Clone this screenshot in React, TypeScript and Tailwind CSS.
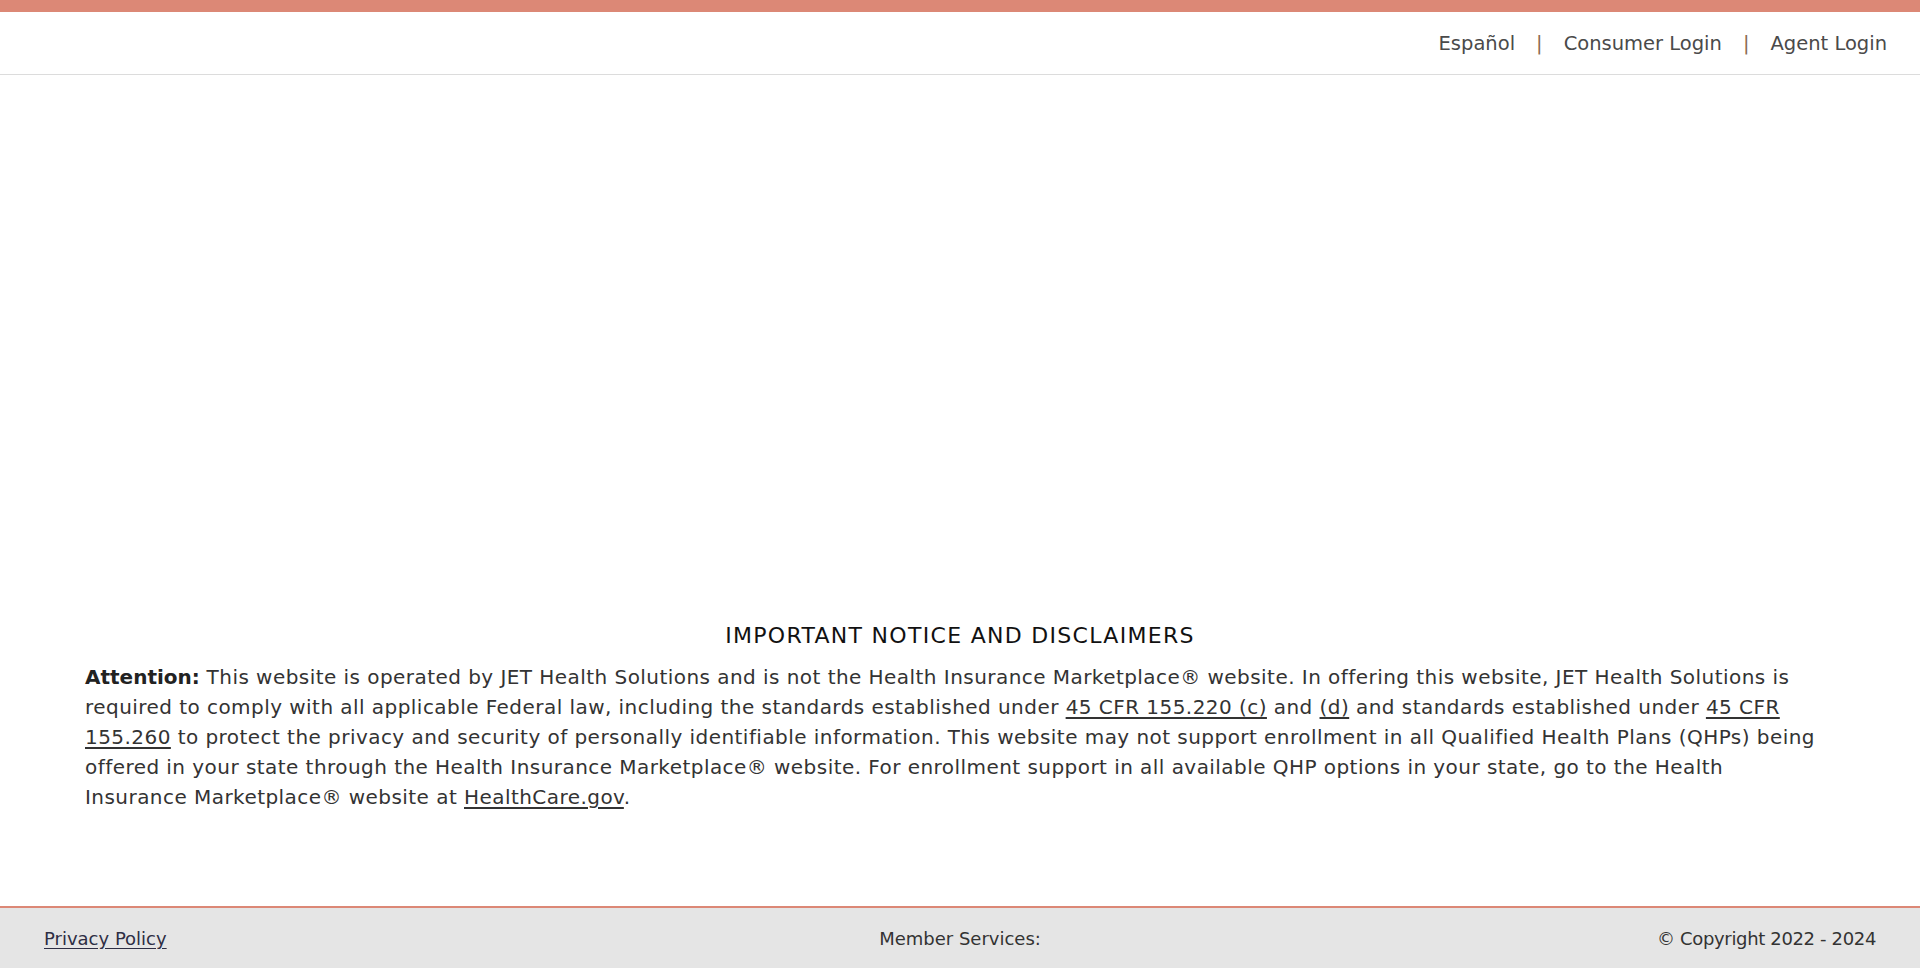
// Landing shell: salmon top rule, utility nav, disclaimer block and footer.
// The hero area above the disclaimer is empty in the reference, so it is
// just padding here.

const NAV_LINKS: readonly string[] = ["Español", "Consumer Login", "Agent Login"];

function TopNav(): JSX.Element {
  return (
    <header className="flex h-[63px] items-center justify-end border-b border-[#dcdcdc] pr-[33px] pt-[2px]">
      <nav className="flex items-center text-[19.5px] text-[#4a4a4a]">
        {NAV_LINKS.map((label, i) => (
          <span key={label} className="flex items-center">
            {i > 0 && <span className="mx-[21px] text-[#8a6a50]">|</span>}
            <a href="#" className="hover:underline">
              {label}
            </a>
          </span>
        ))}
      </nav>
    </header>
  );
}

function Disclaimer(): JSX.Element {
  return (
    <section className="pl-[85px] pr-[95px] pt-[546px]">
      <h2 className="pl-[10px] text-center text-[22px] leading-[30px] tracking-[1.3px] text-[#111]">
        IMPORTANT NOTICE AND DISCLAIMERS
      </h2>
      <p className="mt-[11px] text-[20px] leading-[30px] tracking-[0.45px] text-[#333]">
        <strong className="font-bold tracking-[0px] text-[#222]">Attention:</strong> This website is
        operated by JET Health Solutions and is not the Health Insurance Marketplace® website. In
        offering this website, JET Health Solutions is required to comply with all applicable Federal
        law, including the standards established under{" "}
        <a href="#" className="underline underline-offset-[3px]">
          45 CFR 155.220 (c)
        </a>{" "}
        and{" "}
        <a href="#" className="underline underline-offset-[3px]">
          (d)
        </a>{" "}
        and standards established under{" "}
        <a href="#" className="underline underline-offset-[3px]">
          45 CFR 155.260
        </a>{" "}
        to protect the privacy and security of personally identifiable information. This website may not
        support enrollment in all Qualified Health Plans (QHPs) being offered in your state through the
        Health Insurance Marketplace® website. For enrollment support in all available QHP options in
        your state, go to the Health Insurance Marketplace® website at{" "}
        <a href="#" className="underline underline-offset-[3px]">
          HealthCare.gov
        </a>
        .
      </p>
    </section>
  );
}

function Footer(): JSX.Element {
  return (
    <footer className="grid h-[62px] grid-cols-3 items-center border-t-2 border-[#dc8876] bg-[#e5e5e5] px-[44px] text-[18px] text-[#333]">
      <a href="#" className="justify-self-start underline underline-offset-[3px] text-[#2e2e44]">
        Privacy Policy
      </a>
      <span className="justify-self-center">Member Services:</span>
      <span className="justify-self-end tracking-[-0.35px]">© Copyright 2022 - 2024</span>
    </footer>
  );
}

export default function App(): JSX.Element {
  return (
    <div className="flex min-h-screen flex-col bg-white font-['DejaVu_Sans',sans-serif]">
      <div className="h-[12px] bg-[#dc8876]" />
      <TopNav />
      <main className="flex-1">
        <Disclaimer />
      </main>
      <Footer />
    </div>
  );
}
